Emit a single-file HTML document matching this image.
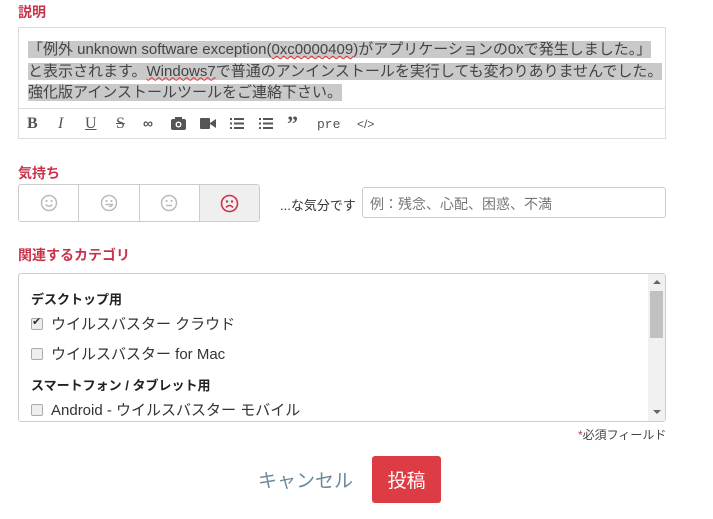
<!DOCTYPE html>
<html><head><meta charset="utf-8"><style>
*{margin:0;padding:0;box-sizing:border-box}
body{width:713px;height:519px;background:#fff;font-family:"Liberation Sans","Noto Sans CJK JP",sans-serif;color:#333;position:relative;overflow:hidden}
.abs{position:absolute}
.lbl{color:#c9324b;font-weight:bold;font-size:14px}
.ed{left:18px;top:27px;width:648px;height:112px;border:1px solid #ddd}
.txt{left:28px;top:39px;font-size:15px;line-height:21.5px;color:#444}
.txt span{background:#c9c9c9}
.u{text-decoration:underline wavy #d33;text-decoration-thickness:1px}
.tb{left:18px;top:108px;width:648px;border-top:1px solid #ddd}
.ic{top:115px;font-size:16px;color:#555}
.mood{left:18px;top:184px;width:242px;height:38px;border:1px solid #ccc;border-radius:3px;display:flex;overflow:hidden}
.mood div{flex:1;border-right:1px solid #ccc;display:flex;align-items:center;justify-content:center}
.mood div:last-child{border-right:none;background:#efefef}
.inp{left:362px;top:187px;width:304px;height:31px;border:1px solid #ccc;border-radius:3px;font-size:14px;color:#777;padding:6px 7px}
.cat{left:18px;top:273px;width:648px;height:149px;border:1px solid #ccc;border-radius:3px}
.h{font-size:13px;font-weight:bold;color:#222;left:31px}
.it{font-size:15px;color:#333;left:31px}
.cb{display:inline-block;width:12px;height:12px;border:1px solid #aaa;border-radius:2px;background:#eee;vertical-align:-1px;margin-right:8px}
</style></head><body>
<div class="abs lbl" style="left:18px;top:2px">説明</div>
<div class="abs ed"></div>
<div class="abs txt"><span>「例外 unknown software exception(<span class="u">0xc0000409</span>)がアプリケーションの0xで発生しました。」</span><br><span>と表示されます。<span class="u">Windows7</span>で普通のアンインストールを実行しても変わりありませんでした。</span><br><span>強化版アインストールツールをご連絡下さい。</span></div>
<div class="abs tb"></div>
<div class="abs ic" style="left:27px;font-family:'Liberation Serif';font-weight:bold">B</div>
<div class="abs ic" style="left:58px;font-family:'Liberation Serif';font-style:italic">I</div>
<div class="abs ic" style="left:85px;font-family:'Liberation Serif';text-decoration:underline">U</div>
<div class="abs ic" style="left:116px;font-family:'Liberation Serif';text-decoration:line-through">S</div>
<div class="abs ic" style="left:143px;font-size:14px;font-weight:bold">∞</div>
<svg class="abs" style="left:171px;top:117px" width="15" height="13"><rect x="0" y="2" width="15" height="11" rx="2" fill="#555"/><rect x="4" y="0" width="7" height="4" fill="#555"/><circle cx="7.5" cy="7.5" r="3" fill="#fff"/><circle cx="7.5" cy="7.5" r="1.6" fill="#555"/></svg>
<svg class="abs" style="left:200px;top:118px" width="16" height="11"><rect x="0" y="0" width="10" height="11" rx="1" fill="#555"/><path d="M10 5 L16 1 V10 L10 6Z" fill="#555"/></svg>
<svg class="abs" style="left:230px;top:117px" width="14" height="13" fill="#555"><rect x="0" y="1" width="2" height="2"/><rect x="0" y="5.5" width="2" height="2"/><rect x="0" y="10" width="2" height="2"/><rect x="4" y="1" width="10" height="2"/><rect x="4" y="5.5" width="10" height="2"/><rect x="4" y="10" width="10" height="2"/></svg>
<svg class="abs" style="left:259px;top:117px" width="14" height="13" fill="#555"><rect x="0" y="1" width="2" height="2"/><rect x="0" y="5.5" width="2" height="2"/><rect x="0" y="10" width="2" height="2"/><rect x="4" y="1" width="10" height="2"/><rect x="4" y="5.5" width="10" height="2"/><rect x="4" y="10" width="10" height="2"/></svg>
<div class="abs ic" style="left:287px;top:111px;font-size:22px;font-weight:bold;font-family:'Liberation Serif'">”</div>
<div class="abs ic" style="left:317px;font-family:'Liberation Mono';font-size:13px;top:117px">pre</div>
<div class="abs ic" style="left:357px;font-size:12px;top:117px">&lt;/&gt;</div>

<div class="abs lbl" style="left:18px;top:163px">気持ち</div>
<div class="abs mood">
<div><svg width="18" height="18"><circle cx="9" cy="9" r="7.5" fill="none" stroke="#bbb" stroke-width="1.5"/><circle cx="6.5" cy="7" r="1.1" fill="#bbb"/><circle cx="11.5" cy="7" r="1.1" fill="#bbb"/><path d="M5.5 10.5 Q9 14 12.5 10.5" fill="none" stroke="#bbb" stroke-width="1.4"/></svg></div>
<div><svg width="18" height="18"><circle cx="9" cy="9" r="7.5" fill="none" stroke="#bbb" stroke-width="1.5"/><circle cx="6.5" cy="7" r="1.1" fill="#bbb"/><circle cx="11.5" cy="7" r="1.1" fill="#bbb"/><path d="M5.5 10.5 H12.5 Q11 13.5 9 12" fill="none" stroke="#bbb" stroke-width="1.4"/></svg></div>
<div><svg width="18" height="18"><circle cx="9" cy="9" r="7.5" fill="none" stroke="#bbb" stroke-width="1.5"/><circle cx="6.5" cy="7" r="1.1" fill="#bbb"/><circle cx="11.5" cy="7" r="1.1" fill="#bbb"/><path d="M6 11.5 H12" fill="none" stroke="#bbb" stroke-width="1.4"/></svg></div>
<div><svg width="19" height="19"><circle cx="9.5" cy="9.5" r="8" fill="none" stroke="#c9324b" stroke-width="1.6"/><circle cx="7" cy="7.5" r="1.2" fill="#c9324b"/><circle cx="12" cy="7.5" r="1.2" fill="#c9324b"/><path d="M6 13.5 Q9.5 9.5 13 13.5" fill="none" stroke="#c9324b" stroke-width="1.5"/></svg></div>
</div>
<div class="abs" style="left:280px;top:195px;font-size:13px;color:#333">...な気分です</div>
<div class="abs inp">例：残念、心配、困惑、不満</div>

<div class="abs lbl" style="left:18px;top:245px">関連するカテゴリ</div>
<div class="abs cat"></div>
<div class="abs" style="left:648px;top:274px;width:17px;height:147px;background:#f1f1f1"></div>
<div class="abs" style="left:650px;top:291px;width:13px;height:47px;background:#c1c1c1"></div>
<div class="abs" style="left:653px;top:280px;border:4px solid transparent;border-bottom:4px solid #666;border-top:none"></div>
<div class="abs" style="left:653px;top:410px;border:4px solid transparent;border-top:4px solid #666;border-bottom:none"></div>
<div class="abs h" style="top:289px">デスクトップ用</div>
<div class="abs it" style="top:313px"><span class="cb" style="position:relative"><span style="position:absolute;left:0px;top:-4px;font-size:11px;color:#333">✔</span></span>ウイルスバスター クラウド</div>
<div class="abs it" style="top:343px"><span class="cb"></span>ウイルスバスター for Mac</div>
<div class="abs h" style="top:375px">スマートフォン / タブレット用</div>
<div class="abs it" style="top:399px"><span class="cb"></span>Android - ウイルスバスター モバイル</div>
<div class="abs" style="left:578px;top:426px;font-size:12px;color:#444"><span style="color:#c9324b">*</span>必須フィールド</div>
<div class="abs" style="left:258px;top:466px;font-size:19px;color:#6b8a9c">キャンセル</div>
<div class="abs" style="left:372px;top:456px;width:69px;height:47px;background:#dd3c45;border-radius:3px;color:#fff;font-size:19px;display:flex;align-items:center;justify-content:center">投稿</div>
</body></html>
